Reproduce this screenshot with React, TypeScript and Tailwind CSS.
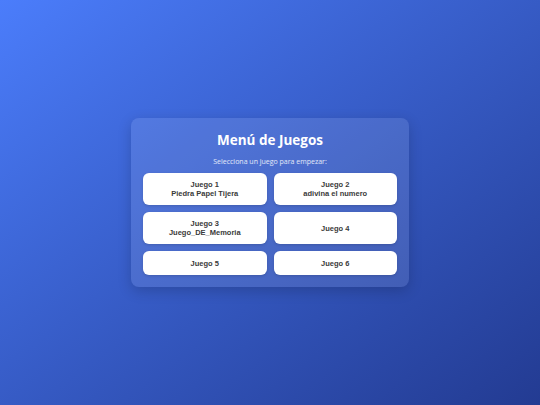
import React from "react";

const games = [
  { name: "Juego 1", sub: "Piedra Papel Tijera" },
  { name: "Juego 2", sub: "adivina el numero" },
  { name: "Juego 3", sub: "Juego_DE_Memoria" },
  { name: "Juego 4" },
  { name: "Juego 5" },
  { name: "Juego 6" },
];

export default function App() {
  return (
    <div className="flex h-[405px] w-[540px] items-center justify-center bg-gradient-to-br from-[#4b7dfb] to-[#233b92]">
      {/* Menu card */}
      <div className="w-[278px] rounded-[8px] bg-white/10 px-3 pb-[12px] pt-[14px] shadow-[0_4px_14px_rgba(0,0,0,0.18)]">
        <h1 className="text-center font-['Open_Sans',sans-serif] text-[13.5px] font-bold leading-[16px] text-white">
          Menú de Juegos
        </h1>
        <p className="mt-[9px] text-center font-['Open_Sans',sans-serif] text-[7px] leading-[10px] text-white/85">
          Selecciona un juego para empezar:
        </p>
        <div className="mt-[6px] grid grid-cols-2 gap-[7px]">
          {games.map((g) => (
            <button
              key={g.name}
              className={`flex flex-col items-center justify-center rounded-[6px] bg-white font-['Liberation_Sans',Arial,sans-serif] text-[7.5px] font-bold leading-[9px] text-[#3a3a3a] shadow-[0_1px_3px_rgba(0,0,0,0.15)] ${
                g.name === "Juego 5" || g.name === "Juego 6" ? "h-[24px]" : "h-[32px]"
              }`}
            >
              <span>{g.name}</span>
              {g.sub && <span>{g.sub}</span>}
            </button>
          ))}
        </div>
      </div>
    </div>
  );
}
